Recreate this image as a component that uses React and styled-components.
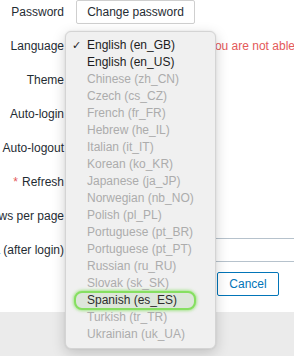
import React from "react";
import styled, { createGlobalStyle } from "styled-components";

const Global = createGlobalStyle`
  html, body { margin: 0; padding: 0; }
  body {
    width: 294px; height: 356px; overflow: hidden;
    background: #ebebeb;
    font-family: "Liberation Sans", Arial, sans-serif;
    font-size: 12px;
    color: #1f2c33;
  }
`;

const Page = styled.div`
  position: relative;
  width: 294px;
  height: 356px;
  overflow: hidden;
`;

const Form = styled.div`
  background: #ffffff;
  display: grid;
  grid-template-columns: 64px 1fr;
  column-gap: 12px;
  row-gap: 10px;
  grid-auto-rows: 24px;
  padding-bottom: 16px;
`;

const Label = styled.div`
  display: flex;
  justify-content: flex-end;
  align-items: center;
  white-space: nowrap;
  color: #1f2c33;
`;

const Star = styled.span`
  color: #e45959;
  margin-right: 4px;
`;

const Field = styled.div`
  display: flex;
  align-items: center;
  gap: 8px;
  padding-left: ${(p) => p.$indent || 0}px;
  white-space: nowrap;
  min-width: 0;
`;

const Button = styled.button`
  flex: none;
  height: 24px;
  box-sizing: border-box;
  padding: 0 10px;
  font-family: inherit;
  font-size: 12px;
  border-radius: 2px;
  background: #ffffff;
  color: ${(p) => (p.$blue ? "#0275b8" : "#1f2c33")};
  border: 1px solid ${(p) => (p.$blue ? "#0275b8" : "#cfcfcf")};
  width: ${(p) => (p.$w ? p.$w + "px" : "auto")};
`;

const Select = styled.div`
  flex: none;
  height: 24px;
  box-sizing: border-box;
  width: ${(p) => p.$w}px;
  border: 1px solid #cfcfcf;
  background: #fff;
`;

const Input = styled.div`
  flex: none;
  height: 24px;
  box-sizing: border-box;
  width: ${(p) => p.$w}px;
  border: 1px solid #b6c2cc;
  background: #fff;
`;

const Warning = styled.span`
  flex: none;
  color: #e45959;
`;

const Menu = styled.div`
  position: absolute;
  left: 65px;
  top: 31px;
  width: 151px;
  box-sizing: border-box;
  padding: 5px 0 5px;
  background: #f0f0f0;
  border: 1px solid #d4d4d4;
  border-radius: 6px;
  box-shadow: 0 4px 14px rgba(0, 0, 0, 0.18), 0 0 2px rgba(0, 0, 0, 0.1);
`;

const Item = styled.div`
  position: relative;
  height: 17px;
  line-height: 17px;
  padding-left: 21px;
  font-size: 12px;
  white-space: nowrap;
  color: ${(p) => (p.$on ? "#1c1c1c" : p.$sel ? "#2e2e2e" : "#acacac")};
`;

const Check = styled.span`
  position: absolute;
  left: 6px;
  top: 0;
  font-family: "DejaVu Sans", sans-serif;
  font-size: 11px;
  color: #1c1c1c;
`;

const Highlight = styled.div`
  position: absolute;
  left: 8px;
  right: 19px;
  top: -1px;
  bottom: -1px;
  border-radius: 8px;
  background: #dde6da;
  border: 2px solid #86df61;
  box-shadow: 0 0 3px 1px rgba(134, 223, 97, 0.7);
  z-index: 0;
`;

const ItemText = styled.span`
  position: relative;
  z-index: 1;
`;

const langs = [
  ["English (en_GB)", "on", true],
  ["English (en_US)", "on"],
  ["Chinese (zh_CN)"],
  ["Czech (cs_CZ)"],
  ["French (fr_FR)"],
  ["Hebrew (he_IL)"],
  ["Italian (it_IT)"],
  ["Korean (ko_KR)"],
  ["Japanese (ja_JP)"],
  ["Norwegian (nb_NO)"],
  ["Polish (pl_PL)"],
  ["Portuguese (pt_BR)"],
  ["Portuguese (pt_PT)"],
  ["Russian (ru_RU)"],
  ["Slovak (sk_SK)"],
  ["Spanish (es_ES)", "sel"],
  ["Turkish (tr_TR)"],
  ["Ukrainian (uk_UA)"],
];

export default function App() {
  return (
    <Page>
      <Global />
      <Form>
        <Label>Password</Label>
        <Field>
          <Button $w={119}>Change password</Button>
        </Field>

        <Label>Language</Label>
        <Field>
          <Select $w={124} />
          <Warning>You are not able to choose some of the languages</Warning>
        </Field>

        <Label>Theme</Label>
        <Field>
          <Select $w={124} />
        </Field>

        <Label>Auto-login</Label>
        <Field />

        <Label>Auto-logout</Label>
        <Field>
          <Input $w={60} />
        </Field>

        <Label>
          <Star>*</Star>Refresh
        </Label>
        <Field>
          <Input $w={60} />
        </Field>

        <Label>Rows per page</Label>
        <Field>
          <Input $w={60} />
        </Field>

        <Label>URL (after login)</Label>
        <Field>
          <Input $w={260} />
        </Field>

        <div />
        <Field $indent={141}>
          <Button $blue $w={62}>Cancel</Button>
        </Field>
      </Form>

      <Menu>
        {langs.map(([name, state, checked]) => (
          <Item key={name} $on={state === "on"} $sel={state === "sel"}>
            {checked && <Check>✓</Check>}
            {state === "sel" && <Highlight />}
            <ItemText>{name}</ItemText>
          </Item>
        ))}
      </Menu>
    </Page>
  );
}
